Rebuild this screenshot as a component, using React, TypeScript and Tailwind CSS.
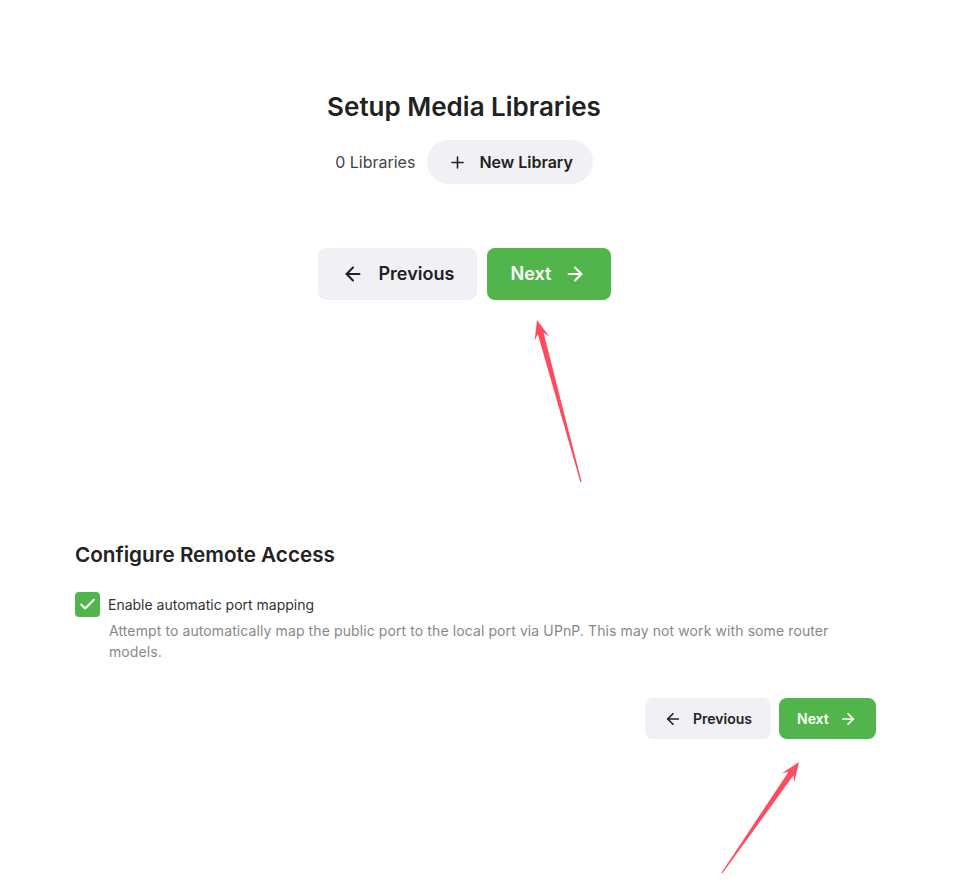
import { ArrowLeft, ArrowRight, Plus, Check } from 'lucide-react'

type Pt = [number, number]

// red annotation arrow: thin tapered shaft with a notched head
function arrowPoints(tail: Pt, tip: Pt) {
  const dx = tip[0] - tail[0]
  const dy = tip[1] - tail[1]
  const len = Math.hypot(dx, dy)
  const ux = dx / len
  const uy = dy / len
  const nx = -uy
  const ny = ux
  const at = (back: number, side: number): string =>
    `${(tip[0] - ux * back + nx * side).toFixed(1)},${(tip[1] - uy * back + ny * side).toFixed(1)}`
  return [
    `${tail[0] + nx * 0.6},${tail[1] + ny * 0.6}`,
    at(14, 3),
    at(19, 7.5),
    at(0, 0),
    at(19, -7.5),
    at(14, -3),
    `${tail[0] - nx * 0.6},${tail[1] - ny * 0.6}`,
  ].join(' ')
}

export default function App() {
  return (
    <div
      className="relative w-full min-h-[894px] bg-white text-[#222]"
      style={{ fontFamily: 'Inter, "Noto Sans", sans-serif' }}
    >
      {/* Setup media libraries */}
      <section className="w-[928px] pt-[90px] flex flex-col items-center">
        <h1 className="text-[26px] leading-[34px] font-semibold text-[#222]">Setup Media Libraries</h1>
        <div className="mt-4 flex items-center gap-3">
          <span className="text-base text-[#444]">0 Libraries</span>
          <button className="h-11 pl-[21px] pr-[20px] rounded-full bg-[#f0f0f5] flex items-center gap-[12px] text-base font-semibold text-[#222]">
            <Plus size={19} strokeWidth={2} />
            New Library
          </button>
        </div>
        <div className="mt-16 flex items-center gap-[10px]">
          <button className="h-[52px] w-[159px] pl-[24px] rounded-lg bg-[#f0f0f5] flex items-center gap-[15px] text-lg font-semibold text-[#222]">
            <ArrowLeft size={22} strokeWidth={2.25} />
            Previous
          </button>
          <button className="h-[52px] w-[124px] pl-[24px] rounded-lg bg-[#52b54b] flex items-center gap-[13px] text-lg font-semibold text-white">
            Next
            <ArrowRight size={22} strokeWidth={2.25} />
          </button>
        </div>
      </section>

      {/* Configure remote access */}
      <section className="ml-[75px] w-[801px] mt-[241px]">
        <h2 className="text-[20.7px] leading-7 font-semibold text-[#222]">Configure Remote Access</h2>
        <label className="mt-[23px] flex items-center gap-2">
          <span className="w-[25px] h-[25px] rounded-[4px] bg-[#52b54b] flex items-center justify-center text-white">
            <Check size={19} strokeWidth={2.5} />
          </span>
          <span className="text-sm text-[#333]">Enable automatic port mapping</span>
        </label>
        <p className="mt-[3px] pl-[34px] text-sm leading-[21px] tracking-[0.1px] text-[#888]">
          Attempt to automatically map the public port to the local port via UPnP. This may not work with some router models.
        </p>
        <div className="mt-9 flex justify-end gap-2">
          <button className="h-[41px] w-[126px] pl-[19px] rounded-lg bg-[#f0f0f5] flex items-center gap-[11px] text-sm font-semibold text-[#222]">
            <ArrowLeft size={18} strokeWidth={2.25} />
            Previous
          </button>
          <button className="h-[41px] w-[97px] pl-[18px] rounded-lg bg-[#52b54b] flex items-center gap-[10px] text-sm font-semibold text-white">
            Next
            <ArrowRight size={18} strokeWidth={2.25} />
          </button>
        </div>
      </section>

      {/* Annotation arrows drawn over the page */}
      <svg className="absolute inset-0 pointer-events-none" width="970" height="894">
        <polygon points={arrowPoints([581, 482], [537, 320])} fill="#fe4b5e" />
        <polygon points={arrowPoints([722, 873], [799, 762])} fill="#fe4b5e" />
      </svg>
    </div>
  )
}
